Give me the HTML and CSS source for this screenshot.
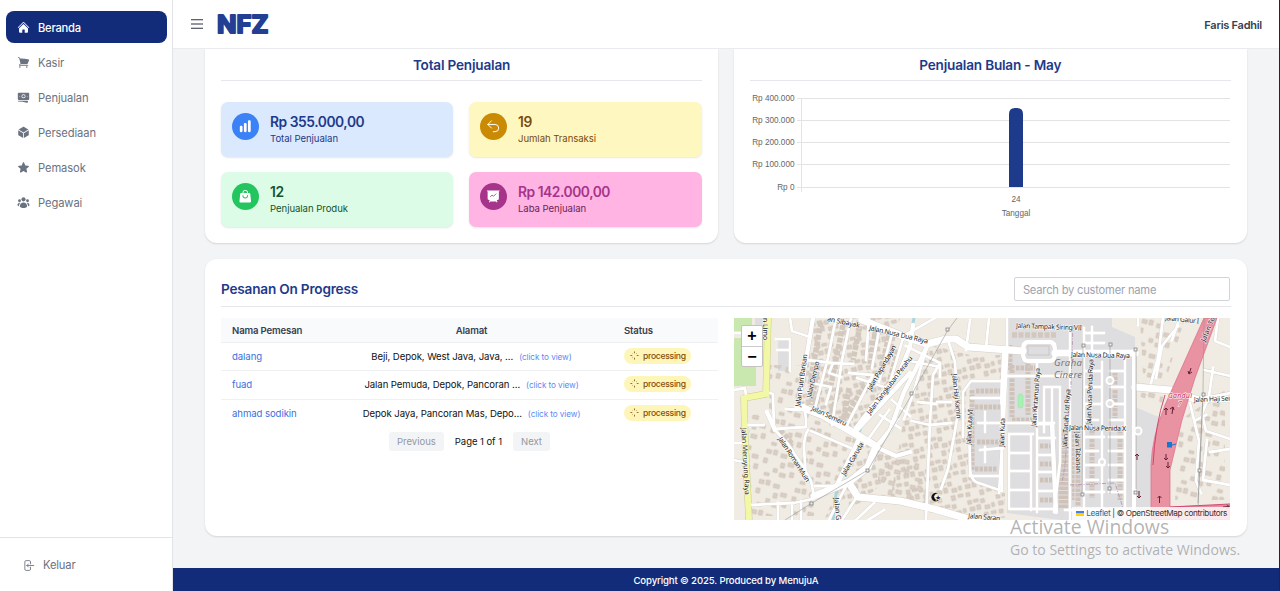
FILE: index.html
```html
<!DOCTYPE html>
<html lang="id">
<head>
<meta charset="utf-8">
<title>NFZ - Beranda</title>
<link rel="stylesheet" href="styles.css">
</head>
<body>
<div class="app">
  <aside class="sidebar">
    <nav class="nav">
      <a class="nav-item active"><svg class="icon" viewBox="0 0 24 24"><path d="M11.47 3.841a.75.75 0 0 1 1.06 0l8.69 8.69a.75.75 0 1 0 1.06-1.061l-8.689-8.69a2.25 2.25 0 0 0-3.182 0l-8.69 8.69a.75.75 0 1 0 1.061 1.06l8.69-8.689Z"/><path d="m12 5.432 8.159 8.159c.03.03.06.058.091.086v6.198c0 1.035-.84 1.875-1.875 1.875H15a.75.75 0 0 1-.75-.75v-4.5a.75.75 0 0 0-.75-.75h-3a.75.75 0 0 0-.75.75V21a.75.75 0 0 1-.75.75H5.625a1.875 1.875 0 0 1-1.875-1.875v-6.198a2.29 2.29 0 0 0 .091-.086L12 5.432Z"/></svg>Beranda</a>
      <a class="nav-item"><svg class="icon" viewBox="0 0 24 24"><path d="M2.25 2.25a.75.75 0 0 0 0 1.5h1.386c.17 0 .318.114.362.278l2.558 9.592a3.752 3.752 0 0 0-2.806 3.63c0 .414.336.75.75.75h15.75a.75.75 0 0 0 0-1.5H5.378A2.25 2.25 0 0 1 7.5 15h11.218a.75.75 0 0 0 .674-.421 60.358 60.358 0 0 0 2.96-7.228.75.75 0 0 0-.525-.965A60.864 60.864 0 0 0 5.68 4.509l-.232-.867A1.875 1.875 0 0 0 3.636 2.25H2.25ZM3.75 20.25a1.5 1.5 0 1 1 3 0 1.5 1.5 0 0 1-3 0ZM16.5 20.25a1.5 1.5 0 1 1 3 0 1.5 1.5 0 0 1-3 0Z"/></svg>Kasir</a>
      <a class="nav-item"><svg class="icon" viewBox="0 0 24 24" fill-rule="evenodd"><path d="M12 7.5a2.25 2.25 0 1 0 0 4.5 2.25 2.25 0 0 0 0-4.5Z"/><path d="M1.5 4.875C1.5 3.839 2.34 3 3.375 3h17.25c1.035 0 1.875.84 1.875 1.875v9.75c0 1.036-.84 1.875-1.875 1.875H3.375A1.875 1.875 0 0 1 1.5 14.625v-9.75ZM8.25 9.75a3.75 3.75 0 1 1 7.5 0 3.75 3.75 0 0 1-7.5 0ZM18.75 9a.75.75 0 0 0-.75.75v.008c0 .414.336.75.75.75h.008a.75.75 0 0 0 .75-.75V9.75a.75.75 0 0 0-.75-.75h-.008ZM4.5 9.75A.75.75 0 0 1 5.25 9h.008a.75.75 0 0 1 .75.75v.008a.75.75 0 0 1-.75.75H5.25a.75.75 0 0 1-.75-.75V9.75Z"/><path d="M2.25 18a.75.75 0 0 0 0 1.5c5.4 0 10.63.722 15.6 2.075 1.19.324 2.4-.558 2.4-1.82V18.75a.75.75 0 0 0-.75-.75H2.25Z"/></svg>Penjualan</a>
      <a class="nav-item"><svg class="icon" viewBox="0 0 24 24"><path d="M12.378 1.602a.75.75 0 0 0-.756 0L3 6.632l9 5.25 9-5.25-8.622-5.03ZM21.75 7.93l-9 5.25v9l8.628-5.032a.75.75 0 0 0 .372-.648V7.93ZM11.25 22.18v-9l-9-5.25v8.57a.75.75 0 0 0 .372.648l8.628 5.033Z"/></svg>Persediaan</a>
      <a class="nav-item"><svg class="icon" viewBox="0 0 24 24"><path d="M10.788 3.21c.448-1.077 1.976-1.077 2.424 0l2.082 5.006 5.404.434c1.164.093 1.636 1.545.749 2.305l-4.117 3.527 1.257 5.273c.271 1.136-.964 2.033-1.96 1.425L12 18.354 7.373 21.18c-.996.608-2.231-.29-1.96-1.425l1.257-5.273-4.117-3.527c-.887-.76-.415-2.212.749-2.305l5.404-.434 2.082-5.005Z"/></svg>Pemasok</a>
      <a class="nav-item"><svg class="icon" viewBox="0 0 24 24"><circle cx="12" cy="6.2" r="3.8"/><circle cx="4.6" cy="8.8" r="2.6"/><circle cx="19.4" cy="8.8" r="2.6"/><path d="M5.2 19.4C5.3 14.8 8.2 12 12 12s6.700 2.800 6.800 7.400c0 1.500-3.600 2.800-6.800 2.800s-6.800-1.300-6.800-2.800ZM5.600 12.700c-1.500 1.900-2.200 4.100-2.100 6.400C1.800 18.600 1 18 .9 17.300c0-2.900 2-4.900 4.700-4.600ZM18.400 12.700c1.500 1.900 2.200 4.100 2.100 6.400 1.700-.5 2.500-1.100 2.600-1.800 0-2.900-2-4.900-4.700-4.600Z"/></svg>Pegawai</a>
    </nav>
    <div class="logout"><svg class="icon line" viewBox="0 0 24 24"><path d="M15.75 9V5.250A2.250 2.250 0 0 0 13.500 3h-6a2.250 2.250 0 0 0-2.250 2.250v13.500A2.250 2.250 0 0 0 7.500 21h6a2.250 2.250 0 0 0 2.250-2.250V15M12 9l-3 3 3 3M9 12h12.750"/></svg>Keluar</div>
  </aside>

  <div class="main">
    <header class="topbar">
      <svg class="burger" viewBox="0 0 12 10"><path d="M0 .7h12M0 5h12M0 9.300h12"/></svg>
      <svg class="logo" viewBox="0 0 54 26"><text x="1" y="21.500" textLength="51.500" lengthAdjust="spacingAndGlyphs">NFZ</text></svg>
      <span class="user">Faris Fadhil</span>
    </header>

    <main class="content">
      <div class="top-cards">
        <section class="card cut">
          <h2 class="card-title">Total Penjualan</h2>
          <div class="stats">
            <div class="stat blue"><span class="badge"><svg viewBox="0 0 24 24"><path d="M18.375 2.250c-1.035 0-1.875.84-1.875 1.875v15.750c0 1.035.84 1.875 1.875 1.875h.75c1.035 0 1.875-.84 1.875-1.875V4.125c0-1.036-.84-1.875-1.875-1.875h-.75ZM9.750 8.625c0-1.036.84-1.875 1.875-1.875h.75c1.036 0 1.875.84 1.875 1.875v11.250c0 1.035-.84 1.875-1.875 1.875h-.75a1.875 1.875 0 0 1-1.875-1.875V8.625ZM3 13.125c0-1.036.84-1.875 1.875-1.875h.75c1.036 0 1.875.84 1.875 1.875v6.750c0 1.035-.84 1.875-1.875 1.875h-.75A1.875 1.875 0 0 1 3 19.875v-6.750Z"/></svg></span><div><div class="value">Rp 355.000,00</div><div class="label">Total Penjualan</div></div></div>
            <div class="stat yellow"><span class="badge"><svg class="line" viewBox="0 0 24 24"><path d="M9 15 3 9l6-6M3 9h12a6 6 0 0 1 0 12h-3"/></svg></span><div><div class="value">19</div><div class="label">Jumlah Transaksi</div></div></div>
            <div class="stat green"><span class="badge"><svg viewBox="0 0 24 24" fill-rule="evenodd"><path d="M7.500 6v.75H5.513c-.96 0-1.764.724-1.865 1.679l-1.263 12A1.875 1.875 0 0 0 4.250 22.500h15.500a1.875 1.875 0 0 0 1.865-2.071l-1.263-12a1.875 1.875 0 0 0-1.865-1.679H16.500V6a4.500 4.500 0 1 0-9 0ZM12 3a3 3 0 0 0-3 3v.75h6V6a3 3 0 0 0-3-3Zm-3 8.250a3 3 0 1 0 6 0v-.75a.75.75 0 0 1 1.500 0v.75a4.500 4.500 0 1 1-9 0v-.75a.75.75 0 0 1 1.500 0v.75Z"/></svg></span><div><div class="value">12</div><div class="label">Penjualan Produk</div></div></div>
            <div class="stat pink"><span class="badge"><svg viewBox="0 0 24 24"><path d="M1.500 2.300h21v1.600h-1.200V16c0 1.200-.9 2-2 2h-1.400l1.100 3.700-1.500.5-.5-1.700H7l-.5 1.700-1.500-.5L6.100 18H4.700c-1.100 0-2-.8-2-2V3.900H1.500Z"/><path class="trend" d="m7 13 3-3 2.500 2L17 7.500"/></svg></span><div><div class="value">Rp 142.000,00</div><div class="label">Laba Penjualan</div></div></div>
          </div>
        </section>

        <section class="card cut">
          <h2 class="card-title">Penjualan Bulan - May</h2>
          <svg class="chart" viewBox="750 90 480 130">
            <path class="grid" d="M797 98.500h433M797 120.500h433M797 142.500h433M797 164.500h433M797 187.500h433M801.500 98v94"/>
            <path class="bar" d="M1009 187v-73q0-6 6-6h2q6 0 6 6v73Z"/>
            <g class="ylab"><text x="794.500" y="101">Rp 400.000</text><text x="794.500" y="123">Rp 300.000</text><text x="794.500" y="145">Rp 200.000</text><text x="794.500" y="167">Rp 100.000</text><text x="794.500" y="189.500">Rp 0</text></g>
            <g class="xlab"><text x="1016" y="201.500">24</text><text x="1016" y="216">Tanggal</text></g>
          </svg>
        </section>
      </div>

      <section class="card orders">
        <div class="orders-head">
          <h2>Pesanan On Progress</h2>
          <input class="search" placeholder="Search by customer name">
        </div>
        <div class="orders-body">
          <div>
            <div class="row head"><span>Nama Pemesan</span><span class="mid">Alamat</span><span>Status</span></div>
            <div class="row"><a>dalang</a><span class="mid">Beji, Depok, West Java, Java, ...<a class="view">(click to view)</a></span><span class="state"><b class="pill"><svg viewBox="0 0 10 10"><path d="M5 .5v2M5 7.500v2M.5 5h2M7.500 5h2M6.800 3.200l.5-.5M2.700 7.300l.5-.5M2.700 2.700l.3.300"/></svg>processing</b></span></div>
            <div class="row"><a>fuad</a><span class="mid">Jalan Pemuda, Depok, Pancoran ...<a class="view">(click to view)</a></span><span class="state"><b class="pill"><svg viewBox="0 0 10 10"><path d="M5 .5v2M5 7.500v2M.5 5h2M7.500 5h2M6.800 3.200l.5-.5M2.700 7.300l.5-.5M2.700 2.700l.3.300"/></svg>processing</b></span></div>
            <div class="row last"><a>ahmad sodikin</a><span class="mid">Depok Jaya, Pancoran Mas, Depo...<a class="view">(click to view)</a></span><span class="state"><b class="pill"><svg viewBox="0 0 10 10"><path d="M5 .5v2M5 7.500v2M.5 5h2M7.500 5h2M6.800 3.200l.5-.5M2.700 7.300l.5-.5M2.700 2.700l.3.300"/></svg>processing</b></span></div>
            <div class="pager"><button>Previous</button><span>Page 1 of 1</span><button>Next</button></div>
          </div>

          <div class="map">
            <svg class="tiles" viewBox="734 318 496 202">
              <defs>
                <pattern id="houses" width="37" height="31" patternUnits="userSpaceOnUse" patternTransform="rotate(14)">
                  <path class="house" d="M2 2h5v4h-5zM9 1h4v5h-4zM17 3h6v4h-6zM1 11h4v5h-4zM19 12h4v5h-4zM26 10h6v4h-6zM13 19h4v4h-4zM20 22h6v4h-6zM30 19h4v5h-4zM5 25h5v3h-5z"/>
                </pattern>
                <pattern id="dense" width="29" height="23" patternUnits="userSpaceOnUse" patternTransform="rotate(-12)">
                  <path class="house" d="M1 1h4v4h-4zM7 1h5v3h-5zM14 2h4v4h-4zM2 8h5v4h-5zM9 7h4v5h-4zM17 9h5v4h-5zM24 8h3v4h-3zM1 16h4v4h-4zM15 16h4v5h-4zM22 16h5v3h-5z"/>
                </pattern>
                <g id="small">
                  <path d="M734 333h33M734 390l11-2 1 8M767 392l6 2 1 35 14 15 14 21 9 16 3 15M774 429l32-2v-8l-2-14M786 409l14 1M746 425h18M734 443h13M734 460l14 3M749 505l45-2 18-4M778 503v17M792 503v17M801 501v19M806 360l27 3 20 1M836 318l-8 40-13 50M851 318l-9 42-10 65M869 318l-3 42M880 325l-8 43M893 330l-14 52M904 335l-16 54M833 363l-4 10 12 4M849 373l24 2M873 375l-27 52M816 384l15 3-5 17M857 378l30 10M808 430q-4 6-4 18l2 31M811 431l40 17M834 486l-19 0M847 484l-18 36M856 498l-14 22M874 503l-18 17M884 510l-16 10M889 410l-25 35M898 419l-17 24M892 400l18 16M880 415l20 13M776 339h14v32M777 350l12 0M790 318l2 13 18 6"/>
                  <path d="M928 343l-15 51-9 25M905 360l35 7M906 346l34 17v14M940 363l-7 12-3 46-4 99M937 402h14M912 421l18 4 21-2M948 340l7 22 3 52-10 55-7 20M970 320l-4 30M989 318l-3 30M905 335l30-17M918 402l18 2M963 437v-45l8-11 31 0v110l-26-9q-6-4-6-14l-1-48M971 398h32M978 423h76M985 412v20M980 450l23-2M985 447v15M970 476h30"/>
                  <path d="M1007 318v38l-3 60-5 77M1003 376h70M1053 424v30M1009 434v75h45M1009 434h22v76M1031 434h2M1009 453h22M1009 471h22M1009 490h22M1053 424h-16v88M1037 438h18M1037 455h16M1037 472h16M1037 491h16M1044 387v45M1060 387v75l-6 50M1044 387h16M1052 388v40M1070 327v195M1037 364v60M1084 328v188M1092 327v36M1084 333h20M1084 343h20M1102 362v149M1125 358v150M1084 371h16M1084 387h16M1084 404h16M1084 420h14M1110 371h15M1110 387h15M1110 404h15M1110 420h15M1084 437h20M1084 451h14M1084 465h20M1084 480h14M1084 492h20M1109 437h16M1109 451h16M1109 465h16M1109 480h16M1109 492h16M1065 510h65"/>
                  <path d="M1163 318l-5 40-7 25M1178 326l-16 20-6 32M1172 340l7-20M1138 325v-7M1213 368l-4 28-7 18 4 17 24 8M1218 318l-3 23 15 6M1204 370l26 6M1207 440l-4 40 27 5M1190 403l9 38-3 40 5 12M1210 452l20-3M1196 420l10-5M1205 398l25-5"/>
                </g>
                <g id="medium">
                  <path d="M813 318l-7 42-8 46M767 412l8 18M858 441l-22 46M910 373l-53 57M913 325l-3 22-10 24-22 28-22 29M876 447l14-17 14-38 24-47M876 447l20 9 14-4M1134 351v170M1004 353l-2 50M1052 424l4 88M1023 351q0-9 5-9h22q5 0 5 9v2q0 8-5 8h-22q-5 0-5-8z"/>
                </g>
                <g id="large">
                  <path d="M798 406l26 10 30 17 22 13-8 21-19 15-35 14M849 483l9 14 42 4 34 8 48 14M862 320l38 15 27 9 19-5 10 0 12 8 55 4M1055 353h80M1135 387l35 3 25 9 35 0"/>
                </g>
              </defs>
              <rect class="land" x="734" y="318" width="496" height="202"/>
              <path class="park" d="M734 318h18v14h-18zM734 338h22v48h-22zM1062 506l20 4v10h-20z"/>
              <path class="resi" d="M755 318h8v15h-8zM1008 318h104v9l23 10v70l26 11-10 50v52h-90l-54-7zM970 383l33 0v108l-33-10zM778 340h12v31h-12z"/>
              <path fill="url(#dense)" d="M815 318h85l-20 90-30 22-50-27zM860 440l40 10v18l-40 35-35 15zM930 345l40 10 35 0v25l-38 3-2 55 10 45 30 10v25l-60-5-55-12 15-90z"/>
              <path fill="url(#houses)" d="M770 365h35l-8 40 65 38-18 37-30 16v20h-65v-100l20-5zM878 452l45 10 5 48-50-10zM1140 375l25 10-3 20-26-10zM1180 420l45-30v110l-50 0zM1140 318h45l-20 65-22-5z"/>
              <path class="row-a" d="M1012 365v52M1028 363v52M1012 420h20M976 391h25M975 407h25M977 442h24M975 469h22M972 390v80M1061 428v80M1066 428v80M1040 446h14M1040 464h14M1040 480h14M1040 500h14M1078 430v76M1092 430v68M1115 372v50M1120 430v70M1010 345v25M1016 368h20M1072 430v70"/>
              <path class="row-b" d="M821 322l-11 62M843 325l-12 60M860 326l-7 34M876 328l-6 36M889 336l-10 42M839 390l-8 24M849 388l-6 34M820 390l-5 16M780 430l13 15M818 365l-7 40M865 385l-22 36M898 350l-12 44M1012 335h45"/>
              <rect class="pitch" x="1018" y="394" width="5" height="14" rx="2.500"/>
              <path class="water" d="M862 424l-4 12M837 486l-4 34M914 318l-3 16"/>
              <use href="#small" class="case c-small"/><use href="#medium" class="case c-medium"/><use href="#large" class="case c-large"/>
              <path class="case c-yellow" d="M768 318l-2 76-22 4 1 42 4 80"/>
              <use href="#small" class="road r-small"/><use href="#medium" class="road r-medium"/><use href="#large" class="road r-large"/>
              <path class="yellow-road" d="M768 318l-2 76-22 4 1 42 4 80"/>
              <rect class="island" x="1028" y="346" width="21" height="9"/>
              <path class="toll" d="M1204 318h13l-22 60-13 42-12 50 0 37 60-2v15h-79v-55q1-28 14-60z"/>
              <path class="toll-line" d="M1170 507l60-3M1165 395q-10 30-12 70"/>
              <path class="power" d="M957 318l-9 12-36 64-15 26-29 50-56 33-27 17M1083 345l-1 150M1110 344v150M1136 349v140M1204 318l-1 75-5 110M1203 393l-5 115"/>
              <g class="pylon"><rect x="946" y="328" width="3" height="3"/><rect x="910" y="392" width="3" height="3"/><rect x="866" y="469" width="3" height="3"/><rect x="810" y="502" width="3" height="3"/><rect x="1082" y="344" width="3" height="3"/><rect x="1109" y="343" width="3" height="3"/><rect x="1134" y="348" width="3" height="3"/><rect x="1081" y="493" width="3" height="3"/><rect x="1108" y="487" width="3" height="3"/><rect x="1134" y="491" width="3" height="3"/><rect x="1202" y="393" width="3" height="3"/><rect x="1198" y="469" width="3" height="3"/></g>
              <path class="border" d="M1073 325l-2 60-6 80-3 18M1070 485l45-2 8 25"/>
              <g class="circle"><circle cx="1110" cy="380.500" r="3.500"/><circle cx="1110" cy="403.500" r="3.500"/><circle cx="1138" cy="431" r="3.500"/><circle cx="1102" cy="462" r="3"/></g>
              <g class="arrows"><path d="M1191 368l-2 6m-1-3 1 3 3-2M1166 415v-7m-2 2 2-2 2 2M1172 414l1-7m-3 2 3-2 1 3M1166 454v6m-2-2 2 2 2-2M1168 462v6m-2-2 2 2 2-2M1159.500 503v-7m-2 2 2-2 2 2M1223 507l6-.4m-2-2 2 2-2 2M1137 460v-6m-2 2 2-2 2 2M1139 491v7m-2-2 2 2 2-2"/></g>
              <rect class="pump" x="1167" y="442" width="5" height="5.500"/><path class="pump-hose" d="M1172 445l4-1"/>
              <path class="moon" d="M938 493.500a4.200 4.200 0 1 0 1 6.200 3.300 3.300 0 1 1-1-6.200z"/><text class="map-text" x="935" y="500" font-size="6">★</text>
              <g class="map-text">
                <text transform="translate(763 318) rotate(90)">n Limo</text>
                <text transform="translate(741.500 428) rotate(87)" textLength="67">Jalan Meruyung Raya</text>
                <text transform="translate(800 407) rotate(-82)" textLength="53">Jalan Putri Barisan</text>
                <text transform="translate(811 398) rotate(-77)" textLength="37">Jalan Dempo</text>
                <text transform="translate(811 410) rotate(25)" textLength="38">Jalan Semeru</text>
                <text transform="translate(778 439) rotate(57)" textLength="52">Jalan Roman Muin</text>
                <text transform="translate(845 476) rotate(-59)" textLength="37">Jalan Garuda</text>
                <text transform="translate(827 321) rotate(12)" textLength="33">an Sibayak</text>
                <text transform="translate(869 330) rotate(13)" textLength="60">Jalan Nusa Dua Raya</text>
                <text transform="translate(871 391) rotate(-60)" textLength="51">Jalan Papandayan</text>
                <text transform="translate(870 415) rotate(-53)" textLength="71">Jalan Tangkuban Perahu</text>
                <text transform="translate(952 374) rotate(84)" textLength="45">Jalan Haji Kamin</text>
                <text transform="translate(971 445) rotate(-87)" textLength="36">Jalan Kuta VI</text>
                <text transform="translate(1004 447) rotate(-88)" textLength="29">Jalan Kuta</text>
                <text transform="translate(1036 427) rotate(-86)" textLength="59">Jalan Kintamani Raya</text>
                <text transform="translate(1067 448) rotate(-87)" textLength="59">Jalan Tanah Lot Raya</text>
                <text transform="translate(1075 432) rotate(88)" textLength="41">Jalan Tabanan</text>
                <text transform="translate(1091 425) rotate(-88)" textLength="66">Jalan Nusa Penida Raya</text>
                <text transform="translate(1016 328) rotate(2)" textLength="66">Jalan Tampak Siring VII</text>
                <text transform="translate(1071 357) rotate(1)" textLength="59">Jalan Nusa Dua Raya</text>
                <text transform="translate(1069 430) rotate(1)" textLength="57">Jalan Nusa Penida X</text>
                <text transform="translate(1165 320) rotate(6)" textLength="34">Jalan Galur I</text>
                <text transform="translate(1205 342) rotate(-67)" textLength="26">Jalan To</text>
                <text transform="translate(1194 402) rotate(-2)" textLength="36">Jalan Haji Sei</text>
                <text transform="translate(968 518) rotate(5)" textLength="32">Jalan Saran</text>
                <text transform="translate(834 498) rotate(84)">Jalan G</text>
              </g>
              <g class="place"><text x="1054" y="366" textLength="28">Graha</text><text x="1054" y="377.500" textLength="28">Cinere</text></g>
              <g class="exit"><text x="1168" y="398" textLength="24">Gandul</text><text x="1178" y="406">7</text></g>
            </svg>
            <div class="zoom"><span>+</span><span>−</span></div>
            <div class="credit"><svg viewBox="0 0 8 5"><path fill="#4c7be1" d="M0 0h8v2.500H0z"/><path fill="#ffd500" d="M0 2.500h8V5H0z"/></svg><a>Leaflet</a> | © OpenStreetMap contributors</div>
          </div>
        </div>
      </section>
    </main>
    <footer class="footer">Copyright © 2025. Produced by MenujuA</footer>
  </div>
  <div class="edge"></div>
</div>
<div class="watermark"><div class="wm-title">Activate Windows</div><div class="wm-sub">Go to Settings to activate Windows.</div></div>
</body>
</html>
```
FILE: styles.css
```css
* { box-sizing: border-box; }
body { margin: 0; font-family: Inter, "Liberation Sans", sans-serif; overflow: hidden; }
h2 { margin: 0; font-weight: 600; color: #1e3a8a; }
.app { display: flex; width: 1280px; height: 591px; background: #f3f4f6; }
.edge { width: 1px; background: #24262b; }

/* Sidebar */
.sidebar { width: 173px; background: #fff; border-right: 1px solid #e2e4e8; display: flex; flex-direction: column; justify-content: space-between; }
.nav { display: flex; flex-direction: column; gap: 3px; padding: 11px 5px 0 5.500px; }
.nav-item { display: flex; align-items: center; gap: 8.500px; height: 32px; padding: 1px 0 0 11px; font-size: 11.200px; letter-spacing: -.1px; color: #6b7280; border-radius: 8px; }
.nav-item.active { background: #132c7a; color: #fff; font-weight: 500; letter-spacing: -.25px; }
.icon { width: 13px; height: 13px; fill: currentColor; }
.line { fill: none; stroke: currentColor; stroke-width: 1.600; stroke-linecap: round; stroke-linejoin: round; }
.logout { height: 54px; border-top: 1px solid #e2e4e8; display: flex; align-items: center; gap: 8px; padding: 1px 0 0 22px; font-size: 11.200px; letter-spacing: -.15px; color: #6b7280; }
.logout .icon { fill: none; }

/* Top bar */
.main { width: 1106px; display: flex; flex-direction: column; }
.topbar { height: 49px; flex: none; background: #fff; border-bottom: 1px solid #e9ebee; display: flex; align-items: center; padding: 0 17px 0 18px; position: relative; z-index: 1; }
.burger { width: 12px; height: 10px; stroke: #2b3140; fill: none; stroke-width: 1.100; }
.logo { margin-left: 13px; width: 54px; height: 26px; overflow: visible; font-size: 24.500px; font-weight: 700; fill: #233f94; stroke: #233f94; stroke-width: 2px; stroke-linejoin: round; }
.user { margin-left: auto; font-size: 11px; letter-spacing: -.25px; font-weight: 600; color: #374151; padding-top: 1px; }

/* Cards */
.content { flex: 1; padding: 0 32.500px 0 32px; display: flex; flex-direction: column; gap: 16px; }
.top-cards { display: grid; grid-template-columns: 513px 512.500px; gap: 16px; height: 194px; }
.card { background: #fff; border-radius: 12px; box-shadow: 0 1px 2px rgba(0,0,0,.13); padding: 16px; }
.card.cut { border-radius: 0 0 12px 12px; padding-top: 0; }
.card-title { height: 32px; line-height: 33px; text-align: center; font-size: 13.600px; letter-spacing: -.2px; border-bottom: 1px solid #e5e7eb; }
.stats { display: grid; grid-template-columns: 232px 233px; gap: 15px 16px; padding-top: 21px; }
.stat { height: 55px; border-radius: 7px; padding: 11px; display: flex; gap: 11px; box-shadow: 0 1px 2px rgba(0,0,0,.1); }
.badge { width: 27px; height: 27px; border-radius: 50%; color: #fff; display: grid; place-items: center; }
.badge svg { width: 14.500px; height: 14.500px; }
.badge svg:not(.line) { fill: #fff; }
.value { font-size: 13.800px; line-height: 19px; font-weight: 600; letter-spacing: -.45px; }
.label { font-size: 9.600px; line-height: 13px; letter-spacing: -.06px; }
.blue { background: #dbe9fe; color: #1e3a8a; } .blue .badge { background: #3b82f6; }
.yellow { background: #fef8c0; color: #7a4a10; } .yellow .badge { background: #ca8a04; }
.green { background: #dcfce7; color: #14532d; } .green .badge { background: #22c55e; }
.pink { background: #ffb4e4; color: #a6348a; } .pink .badge { background: #a6348a; } .pink .label { color: #6b2458; }
.badge .trend { fill: none; stroke: #a6348a; stroke-width: 1.400; }

/* Sales chart */
.chart { width: 480px; height: 130px; display: block; margin-top: 9px; font-family: "Liberation Sans", Arial, sans-serif; font-size: 8.200px; fill: #666; }
.grid { stroke: #e3e3e3; fill: none; }
.bar { fill: #1e3a8a; }
.ylab { text-anchor: end; }
.xlab { text-anchor: middle; }

/* Orders */
.orders { height: 277px; }
.orders-head { display: flex; justify-content: space-between; align-items: center; height: 32px; padding: 2px 0 5px; border-bottom: 1px solid #e5e7eb; }
.orders h2 { font-size: 13.600px; letter-spacing: -.2px; }
.search { width: 216px; height: 24px; margin-right: .6px; border: 1px solid #d1d5db; border-radius: 2px; padding: 1px 8px 0; font: 11.200px Inter, sans-serif; letter-spacing: -.22px; }
.search::placeholder { color: #9ca3af; }
.orders-body { display: grid; grid-template-columns: 497px 496px; gap: 16px; padding-top: 11px; }
.row { display: grid; grid-template-columns: 108px 263px 1fr; align-items: center; height: 28.300px; padding-left: 11px; border-bottom: 1px solid #eff0f2; font-size: 9.600px; letter-spacing: -.08px; color: #111; }
.row > :last-child { padding-left: 21px; }
.row a { color: #3b6fe0; white-space: nowrap; }
.row.head { height: 25px; background: #f9fafb; color: #374151; font-weight: 600; letter-spacing: -.15px; line-height: 23px; }
.row.last { border-bottom: 0; }
.mid { text-align: center; white-space: nowrap; }
.row .view { margin-left: 6px; font-size: 8.200px; color: #5b8af5; }
.state { margin-top: -2px; }
.pill { display: inline-flex; align-items: center; gap: 4px; height: 16px; padding: 0 5px 0 6px; border-radius: 8px; background: #fef6b8; color: #854d0e; font-size: 8.600px; letter-spacing: -.28px; font-weight: 500; vertical-align: middle; }
.pill svg { width: 9px; height: 9px; fill: none; stroke: #854d0e; stroke-width: .9; }
.pager { display: flex; justify-content: center; align-items: center; gap: 11px; margin-top: 4px; font-size: 9.500px; letter-spacing: -.05px; color: #111; }
.pager button { border: 0; border-radius: 3px; background: #f3f4f6; color: #9298a2; font: 9.500px Inter, sans-serif; height: 19px; padding: 0 8px; }

/* Map */
.map { position: relative; height: 202px; overflow: hidden; }
.tiles { display: block; width: 496px; height: 202px; }
.land { fill: #f0ece4; }
.park { fill: #c8e8b0; }
.resi { fill: #dedddf; }
.house { fill: #dacfc5; stroke: #c8bbaf; stroke-width: .5; }
.row-a { stroke: #cfc3b9; stroke-width: 5; stroke-dasharray: 3.500 1; fill: none; }
.row-b { stroke: #d3c8bd; stroke-width: 5.500; stroke-dasharray: 5 1.500; fill: none; }
.pitch { fill: #a9f0b3; stroke: #98d8a4; stroke-width: .4; }
.water { stroke: #a8d5e0; stroke-width: 3; fill: none; }
.case, .road { fill: none; stroke-linejoin: round; }
.case { stroke: #d2cec9; }
.road { stroke: #fff; stroke-linecap: round; }
.c-small { stroke-width: 3.400; } .r-small { stroke-width: 2.800; }
.c-medium { stroke-width: 5.200; } .r-medium { stroke-width: 4.400; }
.c-large { stroke-width: 8; } .r-large { stroke-width: 7.200; }
.c-yellow { stroke: #c9cc88; stroke-width: 7; }
.yellow-road { fill: none; stroke: #f3f8a6; stroke-width: 6; }
.island { fill: #dedddf; stroke: #bbb; stroke-width: .6; }
.toll { fill: #e892a2; stroke: #dc6c85; stroke-width: .7; }
.toll-line { fill: none; stroke: #cf3a68; stroke-width: .9; }
.power { fill: none; stroke: #999; stroke-width: .6; }
.pylon { fill: #eee; stroke: #777; stroke-width: .7; }
.border { fill: none; stroke: #b495ba; stroke-width: .9; stroke-dasharray: 4 1.500 1 1.500; }
.circle { fill: #e2e1df; stroke: #fff; stroke-width: 2; }
.arrows { fill: none; stroke: #672038; stroke-width: 1; }
.pump { fill: #1777ce; }
.pump-hose { stroke: #1777ce; }
.moon { fill: #111; }
.map-text { font: 6.900px "Noto Sans", sans-serif; fill: #222; paint-order: stroke; stroke: rgba(255,255,255,.75); stroke-width: 1.200px; }
.place { font: italic 9.500px "Noto Sans", sans-serif; fill: #777; }
.exit { font: italic 7px "Noto Sans", sans-serif; fill: #c52048; paint-order: stroke; stroke: #fff; stroke-width: 1px; }
.zoom { position: absolute; left: 7px; top: 7px; width: 22px; height: 42px; background: #fff; border: 1px solid #c5c3bf; border-radius: 2px; display: grid; grid-template-rows: 1fr 1fr; font: bold 16px/20px "Liberation Sans", sans-serif; text-align: center; }
.zoom span + span { border-top: 1px solid #ccc; }
.credit { position: absolute; right: 0; bottom: 0; height: 13px; padding: 0 3px 0 4px; line-height: 13px; background: rgba(255,255,255,.8); font-family: Inter, sans-serif; font-size: 8.200px; letter-spacing: -.35px; color: #333; white-space: nowrap; }
.credit svg { width: 8px; height: 5px; margin-right: 2.500px; }
.credit a { color: #0078a8; }

.footer { height: 23px; flex: none; background: #132c7a; color: #fff; text-align: center; font-size: 9.600px; letter-spacing: -.13px; line-height: 25px; font-weight: 500; }

.watermark { position: absolute; left: 1010px; top: 514px; z-index: 2; font-family: "Open Sans", sans-serif; color: rgba(150,150,150,.72); white-space: nowrap; }
.wm-title { font-size: 19.400px; line-height: 26px; }
.wm-sub { font-size: 14.050px; line-height: 20px; }
```
